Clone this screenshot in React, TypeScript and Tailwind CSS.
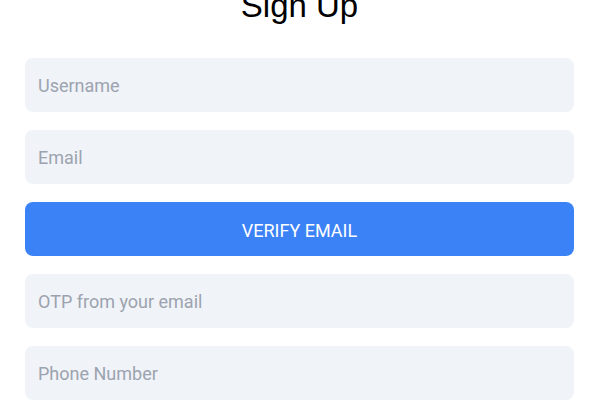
import React, { useState } from "react";

export default function App() {
  const [username, setUsername] = useState("");
  const [email, setEmail] = useState("");
  const [otp, setOtp] = useState("");
  const [phone, setPhone] = useState("");

  const inputClass =
    "w-full h-[54px] px-[13px] rounded-[8px] bg-[#f0f3f8] text-[18px] text-gray-700 placeholder-[#9ca3af] outline-none";

  return (
    <div className="min-h-screen bg-white pl-[25px] pr-[19px] font-['Roboto','Liberation_Sans',sans-serif]">
      <h1 className="mt-[-14px] text-center text-[33px] leading-[40px] text-black font-['Liberation_Sans',sans-serif]">
        Sign Up
      </h1>

      <form
        className="mt-[32px] flex flex-col gap-[18px]"
        onSubmit={(e) => e.preventDefault()}
      >
        <input
          type="text"
          value={username}
          onChange={(e) => setUsername(e.target.value)}
          placeholder="Username"
          className={inputClass}
        />
        <input
          type="email"
          value={email}
          onChange={(e) => setEmail(e.target.value)}
          placeholder="Email"
          className={inputClass}
        />
        <button
          type="button"
          className="w-full h-[54px] pt-[2px] rounded-[8px] bg-[#3b82f6] text-white text-[18px] uppercase"
        >
          Verify Email
        </button>
        <input
          type="text"
          value={otp}
          onChange={(e) => setOtp(e.target.value)}
          placeholder="OTP from your email"
          className={inputClass}
        />
        <input
          type="tel"
          value={phone}
          onChange={(e) => setPhone(e.target.value)}
          placeholder="Phone Number"
          className={inputClass}
        />
      </form>
    </div>
  );
}
